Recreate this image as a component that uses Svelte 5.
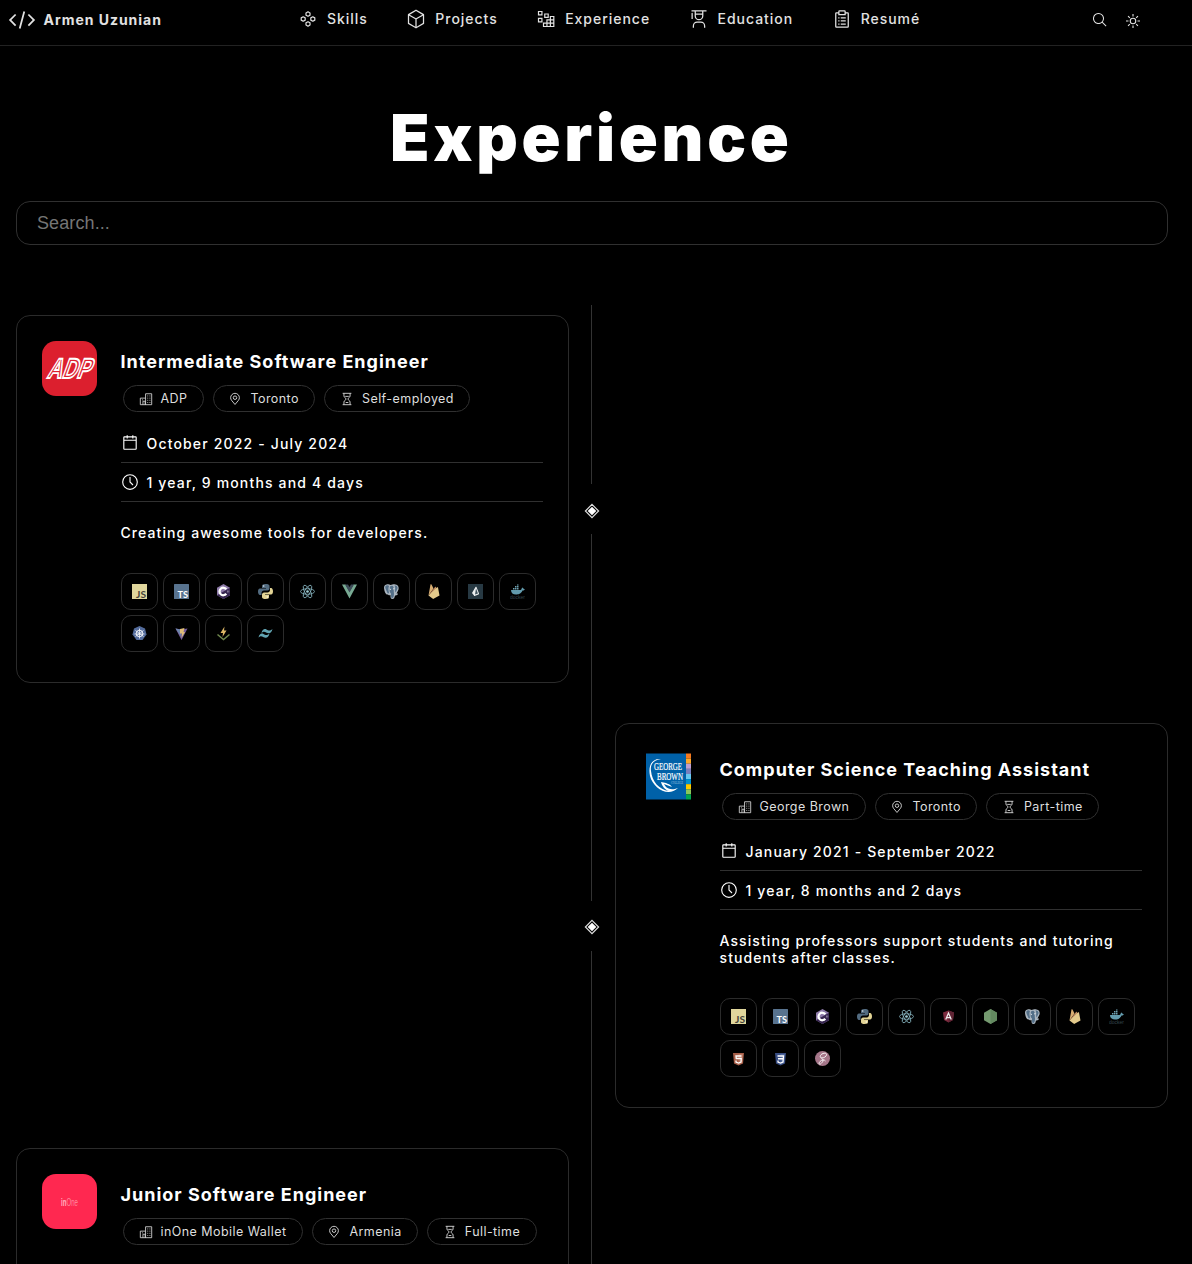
<script>
  const nav = [
    { label: 'Skills', icon: 'skills' },
    { label: 'Projects', icon: 'cube' },
    { label: 'Experience', icon: 'blocks' },
    { label: 'Education', icon: 'education' },
    { label: 'Resumé', icon: 'clipboard' }
  ];

  const jobs = [
    {
      side: 'left', logo: 'adp', title: 'Intermediate Software Engineer',
      company: 'ADP', location: 'Toronto', contract: 'Self-employed',
      period: 'October 2022 - July 2024', duration: '1 year, 9 months and 4 days',
      description: 'Creating awesome tools for developers.',
      skills: ['js', 'ts', 'csharp', 'python', 'react', 'vue', 'postgres', 'firebase', 'prisma', 'docker', 'k8s', 'vite', 'vitest', 'tailwind']
    },
    {
      side: 'right', logo: 'gbc', title: 'Computer Science Teaching Assistant',
      company: 'George Brown', location: 'Toronto', contract: 'Part-time',
      period: 'January 2021 - September 2022', duration: '1 year, 8 months and 2 days',
      description: 'Assisting professors support students and tutoring students after classes.',
      skills: ['js', 'ts', 'csharp', 'python', 'react', 'angular', 'node', 'postgres', 'firebase', 'docker', 'html', 'css', 'sass']
    },
    {
      side: 'left', logo: 'inone', title: 'Junior Software Engineer',
      company: 'inOne Mobile Wallet', location: 'Armenia', contract: 'Full-time',
      skills: []
    }
  ];
</script>

{#snippet icon(name, size)}
  <svg class="icon" width={size} height={size} viewBox="0 0 32 32" fill="currentColor" aria-hidden="true">
    {#if name === 'code'}
      <path d="M31 16l-7 7-1.41-1.41L28.17 16l-5.58-5.59L24 9zM1 16l7-7 1.41 1.41L3.83 16l5.58 5.59L8 23zM12.42 25.484L17.64 6l1.932.517L14.352 26z" />
    {:else if name === 'skills'}
      <g fill="none" stroke="currentColor" stroke-width="1.9">
        <path d="M16 4.500l3.200 1.800v3.600L16 11.700l-3.200-1.800V6.300zM8.300 12.400l3.200 1.800v3.600l-3.200 1.800-3.200-1.800v-3.600zM23.700 12.400l3.200 1.800v3.600l-3.200 1.800-3.200-1.800v-3.600zM16 20.300l3.200 1.800v3.600L16 27.500l-3.200-1.800v-3.600z" stroke-linejoin="round" />
      </g>
    {:else if name === 'cube'}
      <path d="M28.504 8.136l-12-7a1 1 0 0 0-1.008 0l-12 7A1 1 0 0 0 3 9v14a1 1 0 0 0 .496.864l12 7a1 1 0 0 0 1.008 0l12-7A1 1 0 0 0 29 23V9a1 1 0 0 0-.496-.864zM16 3.158L26.016 9 16 14.842 5.984 9zM5 10.740l10 5.833V28.260L5 22.426zM17 28.260V16.574l10-5.833v11.685z" />
    {:else if name === 'blocks'}
      <g fill="none" stroke="currentColor" stroke-width="1.9">
        <path d="M4 4h5.500v5.500H4zM14 8h5.500v5.500H14zM4 15h5.500v5.500H4z" />
        <path d="M12 22.500h16.500V28H12zM17.500 28V17.500h11M23 28V12h5.500v16" />
      </g>
    {:else if name === 'education'}
      <path d="M26 30h-2v-3a5.006 5.006 0 0 0-5-5h-6a5.006 5.006 0 0 0-5 5v3H6v-3a7.009 7.009 0 0 1 7-7h6a7.009 7.009 0 0 1 7 7zM5 6a1 1 0 0 0-1 1v9h2V7a1 1 0 0 0-1-1zM4 2v2h5v7a7 7 0 0 0 14 0V4h5V2zm7 2h10v3H11zm5 12a5 5 0 0 1-5-5V9h10v2a5 5 0 0 1-5 5z" />
    {:else if name === 'clipboard'}
      <path d="M25 5h-3V4a2 2 0 0 0-2-2h-8a2 2 0 0 0-2 2v1H7a2 2 0 0 0-2 2v21a2 2 0 0 0 2 2h18a2 2 0 0 0 2-2V7a2 2 0 0 0-2-2zM12 4h8v4h-8zm13 24H7V7h3v3h12V7h3zM14 13h8v2h-8zM14 18h8v2h-8zM14 23h8v2h-8zM10 13h2v2h-2zM10 18h2v2h-2zM10 23h2v2h-2z" />
    {:else if name === 'search'}
      <path d="M29 27.586l-7.552-7.552a11.018 11.018 0 1 0-1.414 1.414L27.586 29zM4 13a9 9 0 1 1 9 9 9.010 9.010 0 0 1-9-9z" />
    {:else if name === 'sun'}
      <g fill="none" stroke="currentColor" stroke-width="2.2">
        <circle cx="16" cy="16" r="5.500" />
        <path d="M16 2v5M16 25v5M2 16h5M25 16h5M6.100 6.100l3.500 3.500M22.400 22.400l3.500 3.500M6.100 25.900l3.500-3.500M22.400 9.600l3.500-3.500" />
      </g>
    {:else if name === 'building'}
      <g fill="none" stroke="currentColor" stroke-width="1.9">
        <path d="M15 29V4h14v25H3V14h12M9 29v-8h5v8" />
        <path d="M19 9h2M24 9h2M19 14h2M24 14h2M19 19h2M24 19h2M19 24h2M24 24h2M7 18h2" />
      </g>
    {:else if name === 'pin'}
      <g fill="none" stroke="currentColor" stroke-width="2">
        <circle cx="16" cy="13" r="4" />
        <path d="M16 28.500l-8-9.600A9.900 9.900 0 0 1 6 13a10 10 0 0 1 20 0 9.900 9.900 0 0 1-2 5.900z" />
      </g>
    {:else if name === 'hourglass'}
      <g fill="none" stroke="currentColor" stroke-width="2">
        <path d="M6 3h20M6 29h20M9 3v6c0 4 5 4.500 5 7s-5 3-5 7v6M23 3v6c0 4-5 4.500-5 7s5 3 5 7v6M12 10h8M13 24h6" />
      </g>
    {:else if name === 'calendar'}
      <path d="M26 4h-4V2h-2v2h-8V2h-2v2H6a2 2 0 0 0-2 2v20a2 2 0 0 0 2 2h20a2 2 0 0 0 2-2V6a2 2 0 0 0-2-2zm0 22H6V12h20zm0-16H6V6h4v2h2V6h8v2h2V6h4z" />
    {:else if name === 'clock'}
      <path d="M16 30a14 14 0 1 1 14-14 14 14 0 0 1-14 14zm0-26a12 12 0 1 0 12 12A12 12 0 0 0 16 4z" />
      <path d="M20.590 22L15 16.410V7h2v8.580l5 5.010z" />
    {/if}
  </svg>
{/snippet}

{#snippet companyLogo(name)}
  <svg class="logo" width="55" height="55" viewBox="0 0 55 55" aria-hidden="true">
    {#if name === 'adp'}
      <rect width="55" height="55" rx="14" fill="#dc1f2e" />
      <g transform="translate(3.500 37) skewX(-20)">
        <text class="adp" x="1" y="0" textLength="43" lengthAdjust="spacingAndGlyphs">ADP</text>
      </g>
    {:else if name === 'gbc'}
      <rect x="5" y="4.500" width="40" height="46" fill="#0061a8" />
      {#each ['#f47920', '#fba92c', '#bd9fd0', '#7b7fbd', '#68c8ef', '#0090cf', '#fdcb00', '#8cc65a', '#00a651'] as color, i}
        <rect x="45" y={4.5 + i * 5.11} width="5" height="5.150" fill={color} />
      {/each}
      <path d="M20 10C10 9 7 18 9 27c3 12 18 22 28 12-8 3-12 0-14-4l8 3c-2-3-4-3-6-4l-5-1c1 4 4 8 8 9-10-1-17-10-18-20-1-6 2-11 10-12z" fill="#fff" />
      <text class="gbc" x="13" y="20.500" textLength="28" lengthAdjust="spacingAndGlyphs">GEORGE</text>
      <text class="gbc" x="16" y="30.500" textLength="26" lengthAdjust="spacingAndGlyphs">BROWN</text>
      <text class="gbc-sub" x="30" y="35" textLength="12" lengthAdjust="spacingAndGlyphs">COLLEGE</text>
    {:else}
      <rect width="55" height="55" rx="14" fill="#ff2850" />
      <text class="inone" x="19" y="32" textLength="17" lengthAdjust="spacingAndGlyphs"><tspan class="heavy">in</tspan>One</text>
    {/if}
  </svg>
{/snippet}

{#snippet skill(name)}
  <svg width="15" height="15" viewBox="0 0 30 30" aria-hidden="true">
    {#if name === 'js'}
      <rect width="30" height="30" fill="#e0d69c" />
      <text class="tile-text" x="8" y="27" fill="#45433a" textLength="20" lengthAdjust="spacingAndGlyphs">JS</text>
    {:else if name === 'ts'}
      <rect width="30" height="30" rx="1" fill="#58738f" />
      <text class="tile-text" x="7" y="27" fill="#fff" textLength="21" lengthAdjust="spacingAndGlyphs">TS</text>
    {:else if name === 'csharp'}
      <path d="M15 0l13 7.500v15L15 30 2 22.500v-15z" fill="#8d7aa8" />
      <path d="M28 7.500v15L15 30 2 22.500z" fill="#36254f" />
      <path d="M20.500 10.500a7.500 7.500 0 1 0 0 9" fill="none" stroke="#fff" stroke-width="4.500" />
      <path d="M23 13v4M25.500 13v4" stroke="#c9c0d6" stroke-width="1" />
    {:else if name === 'python'}
      <path d="M15 0c-6 0-7 2-7 4v4h8v1H4C1 9 0 12 0 15s1 7 4 7h3v-4c0-3 2-5 5-5h7c2 0 4-2 4-4V4c0-3-3-4-8-4z" fill="#526b80" />
      <path d="M15 30c6 0 7-2 7-4v-4h-8v-1h12c3 0 4-3 4-6s-1-7-4-7h-2v4c0 3-2 5-5 5h-7c-2 0-4 2-4 4v5c0 3 3 4 7 4z" fill="#e2d394" />
      <circle cx="11.500" cy="4" r="1.300" fill="#fff" /><circle cx="18.500" cy="26" r="1.300" fill="#fff" />
    {:else if name === 'react'}
      <g fill="none" stroke="#83b0ba" stroke-width="1.700">
        <ellipse cx="15" cy="15" rx="14" ry="5.500" />
        <ellipse cx="15" cy="15" rx="14" ry="5.500" transform="rotate(60 15 15)" />
        <ellipse cx="15" cy="15" rx="14" ry="5.500" transform="rotate(120 15 15)" />
      </g>
      <circle cx="15" cy="15" r="2.700" fill="#9ccbd4" />
    {:else if name === 'vue'}
      <path d="M0 1h7l8 14 8-14h7L15 29z" fill="#78aa93" />
      <path d="M6 1h6l3 5 3-5h6l-9 16z" fill="#3d4b58" />
    {:else if name === 'postgres'}
      <path d="M5 1c4-1 6 0 8 1 4-1 6-2 10-1 6 1 7 6 6 10-1 3-3 6-4 8 2 0 3 0 3 1-1 3-5 3-6 3-1 5-2 7-5 7-4 0-4-3-4-8-2 1-5 0-5-1-5 1-7-6-8-13C0 4 1 2 5 1z" fill="#aab5bf" />
      <path d="M5 3c2-1 4 0 5 1-2 5-1 9 0 13-1 3-3 2-4-1C4 11 0 5 5 3zM12 5c4-3 6-1 7 1 1 5 0 9 1 13 0 5-1 9-4 9-2 0-2-6-2-9-4-3-3-9-2-14zM21 3c4-1 7 2 6 6-1 3-3 6-4 8-2-6 1-9-2-14z" fill="#536f88" />
      <path d="M11 10l3 1M18 10l3-1" stroke="#d7dfe5" stroke-width="2" />
    {:else if name === 'firebase'}
      <path d="M5 23L9 1c0-1 1-1 2 0l4 8z" fill="#d8ad72" />
      <path d="M5 23L18 6c1-1 1-1 2 0l2 5z" fill="#bf8a60" />
      <path d="M5 23L22 7c1-1 2-1 2 0l3 16-11 6c-1 1-2 1-3 0z" fill="#e3ca8c" />
    {:else if name === 'prisma'}
      <rect width="30" height="30" fill="#273943" />
      <path d="M8 18l7-12c1-1 1-1 2 0l5 13c0 1 0 1-1 2l-8 3c-1 0-1 0-1-1z" fill="#edf0f1" />
      <path d="M16 9l4 10-6 2z" fill="#425560" />
    {:else if name === 'docker'}
      <path d="M2 12h19c2 0 2-4 4-5l3 3 2 1c-2 2-4 2-5 2-3 7-8 8-13 8-6 0-10-3-10-9z" fill="#629bad" />
      <path d="M6 8h3v3H6zM10 8h3v3h-3zM14 8h3v3h-3zM10 4h3v3h-3zM14 4h3v3h-3zM14 1h3v2h-3z" fill="#6fa2b2" />
      <text class="docker" x="0" y="29" fill="#34464e" textLength="30" lengthAdjust="spacingAndGlyphs">docker</text>
    {:else if name === 'k8s'}
      <path d="M15 0l11 5 3 12-8 11H9L1 17 4 5z" fill="#536b9b" />
      <g fill="none" stroke="#fff" stroke-width="1.800">
        <circle cx="15" cy="15" r="6.500" />
        <path d="M15 5v20M7 9l16 12M23 9L7 21M5 16h20" stroke-width="1.500" />
      </g>
    {:else if name === 'vite'}
      <path d="M3 5l12 2 12-2-12 23z" fill="#765d9c" />
      <path d="M3 5l10 2 2 15z" fill="#6d85a9" />
      <path d="M12 6l9-2-2 8h3l-7 12 1-9h-4z" fill="#dfbc79" />
    {:else if name === 'vitest'}
      <path d="M17 1L9 14h5l-1 8 8-13h-5z" fill="#dfb967" />
      <path d="M3 17l12 10 12-10" fill="none" stroke="#70884e" stroke-width="3" />
    {:else if name === 'tailwind'}
      <path d="M7 14c2-8 6-9 10-7 4 2 6 4 12-1-2 8-6 10-10 8-4-2-7-5-12 0zM1 23c2-8 6-9 10-7 4 2 6 4 12-1-2 8-6 10-10 8-4-2-7-5-12 0z" fill="#62a5b3" />
    {:else if name === 'angular'}
      <path d="M15 3l11 4-2 15-9 5-9-5L4 7z" fill="#7d2b3f" />
      <path d="M15 3l11 4-2 15-9 5z" fill="#5f2434" />
      <path d="M9.500 21L15 8l5.500 13M11 17h8" fill="none" stroke="#eee" stroke-width="2.500" />
    {:else if name === 'node'}
      <path d="M15 0l13 7.500v15L15 30 2 22.500v-15z" fill="#759a70" />
      <path d="M15 0l13 7.500v15L15 30z" fill="#638960" />
    {:else if name === 'html'}
      <path d="M4 4h22l-2 21-9 4-9-4z" fill="#a75e48" /><path d="M15 6h9l-2 18-7 3z" fill="#b97660" />
      <path d="M21 10H10l.5 5h10l-.5 7-5 2-5-2v-3" fill="none" stroke="#fff" stroke-width="2.600" />
    {:else if name === 'css'}
      <path d="M4 4h22l-2 21-9 4-9-4z" fill="#394e83" /><path d="M15 6h9l-2 18-7 3z" fill="#50699d" />
      <path d="M9 10h12l-1 12-5 2-5-2v-3M10 15.500h10" fill="none" stroke="#fff" stroke-width="2.600" />
    {:else if name === 'sass'}
      <circle cx="15" cy="15" r="15" fill="#a57689" />
      <path d="M14 15c-5-2-5-7 2-10 6-2 9 1 6 5-3 4-8 4-9 3M14 15c4 3 2 7-3 11-3 2-4-2-1-5 4-4 9-4 11-1" fill="none" stroke="#fff" stroke-width="1.800" />
    {/if}
  </svg>
{/snippet}

<div class="page">
  <header>
    <a class="brand" href="#home">{@render icon('code', 28)}<span>Armen Uzunian</span></a>
    <nav>
      {#each nav as item}
        <a href="#{item.icon}">{@render icon(item.icon, 20)}<span>{item.label}</span></a>
      {/each}
    </nav>
    <div class="actions">
      {@render icon('search', 16)}
      <div class="theme">{@render icon('sun', 16)}</div>
    </div>
  </header>

  <main>
    <h1>Experience</h1>
    <input type="text" placeholder="Search..." aria-label="Search" />

    <div class="timeline">
      {#each jobs as job}
        <section class="row">
          <div class="rail">
            <i></i>
            <svg width="16" height="16" viewBox="0 0 16 16" aria-hidden="true">
              <path d="M8 1.400L14.600 8 8 14.600 1.400 8z" fill="none" stroke="#ddd" stroke-width="1.200" />
              <path d="M8 3.700L12.300 8 8 12.300 3.700 8z" fill="#fff" />
            </svg>
            <i></i>
          </div>
          <article class={job.side}>
            {@render companyLogo(job.logo)}
            <div class="body">
              <h2>{job.title}</h2>
              <div class="chips">
                <span class="chip">{@render icon('building', 14)}{job.company}</span>
                <span class="chip">{@render icon('pin', 14)}{job.location}</span>
                <span class="chip">{@render icon('hourglass', 14)}{job.contract}</span>
              </div>
              {#if job.period}
                <div class="fact">{@render icon('calendar', 18)}<span>{job.period}</span></div>
                <div class="fact">{@render icon('clock', 18)}<span>{job.duration}</span></div>
                <p>{job.description}</p>
                <div class="skills">
                  {#each job.skills as name}
                    <div class="tile">{@render skill(name)}</div>
                  {/each}
                </div>
              {/if}
            </div>
          </article>
        </section>
      {/each}
    </div>
  </main>
</div>

<style>
  :global(body) { background: #000; }
  * { box-sizing: border-box; }
  .page {
    width: 1192px; height: 1264px; overflow: hidden; background: #000; color: #fff;
    font-family: Inter, 'Liberation Sans', sans-serif; font-size: 14px; line-height: 17px; letter-spacing: 1px;
  }
  svg { display: block; flex: none; }
  header {
    height: 46px; border-bottom: 1px solid #222; display: grid;
    grid-template-columns: 298px 1fr 100px; color: #e2e2e2;
  }
  a { color: inherit; text-decoration: none; display: flex; align-items: center; }
  .brand { height: 40px; padding-left: 8px; gap: 7.500px; font-weight: 700; letter-spacing: .97px; }
  .brand span { padding-bottom: 1px; }
  nav { display: flex; height: 37px; gap: 38.500px; }
  nav a { gap: 9px; font-weight: 450; letter-spacing: .97px; }
  .actions { display: flex; height: 40px; align-items: center; gap: 17px; }
  .theme { padding-top: 2px; }
  main { padding: 0 24px 0 16px; }
  h1 {
    margin: 0; padding: 54px 1.500px 0 0; height: 155px; text-align: center; font-size: 64.500px; line-height: 76px;
    font-weight: 900; letter-spacing: 3.700px;
  }
  input {
    display: block; width: 1152px; height: 44px; border: 1px solid #303030; border-radius: 14px; background: #000;
    padding: 0 20px; font: 18px 'Liberation Sans', Arial, sans-serif; letter-spacing: .1px; color: #fff; outline: 0;
  }
  input::placeholder { color: #757575; }
  .timeline { padding-top: 60px; }
  .row { display: grid; grid-template-columns: 553px 46px 553px; }
  .rail { grid-column: 2; grid-row: 1; display: flex; flex-direction: column; align-items: center; }
  .rail i { flex: 1; width: 1px; margin-right: 1px; background: #333; }
  .rail svg { margin: 18.490px 0 15.510px; }
  article {
    grid-row: 1; margin: 10px 0 30px; min-height: 368px; border: 1px solid #2b2b2b; border-radius: 14px;
    padding: 25px 25px 30px; display: flex; gap: 24px;
  }
  .left { grid-column: 1; }
  .right { grid-column: 3; }
  .body { flex: 1; min-width: 0; }
  h2 { margin: 0 0 0 -.5px; height: 44px; padding-top: 10px; font-size: 18px; line-height: 22px; font-weight: 700; letter-spacing: 1px; }
  .chips { display: flex; gap: 9px; padding-left: 2px; margin-bottom: 12px; }
  .chip {
    height: 27px; display: flex; align-items: center; gap: 8px; border: 1px solid #303030; border-radius: 14px;
    padding: 0 15.500px 0 14.500px; font-size: 12.500px; letter-spacing: .44px; font-weight: 420; color: #dedede; white-space: nowrap;
  }
  .fact { height: 39px; border-bottom: 1px solid #303030; display: flex; align-items: center; gap: 7.500px; font-weight: 450; letter-spacing: 1.160px; }
  p { margin: 0 0 0 -.5px; padding: 22px 0 32px; font-weight: 450; letter-spacing: 1.090px; }
  .skills { display: flex; flex-wrap: wrap; gap: 5px; }
  .tile { width: 37px; height: 37px; border: 1px solid #2b2b2b; border-radius: 10px; display: grid; place-items: center; }
  .adp { font: 700 28px 'Liberation Sans', sans-serif; letter-spacing: 0; fill: #dc1f2e; stroke: #fff; stroke-width: 1.900px; }
  .gbc { font: 10.500px 'Liberation Serif', serif; letter-spacing: 0; fill: #fff; stroke: #fff; stroke-width: .2px; }
  .gbc-sub { font: 4px 'Liberation Serif', serif; letter-spacing: 0; fill: #a9cbe2; }
  .inone { font: 10px 'Liberation Sans', sans-serif; letter-spacing: 0; fill: #ff8a9f; }
  .heavy { font-weight: 700; fill: #ffb3c0; }
  .tile-text { font: 700 17px Lato, 'Liberation Sans', sans-serif; letter-spacing: 0; }
  .docker { font: 9px 'Liberation Sans', sans-serif; letter-spacing: 0; }
</style>
